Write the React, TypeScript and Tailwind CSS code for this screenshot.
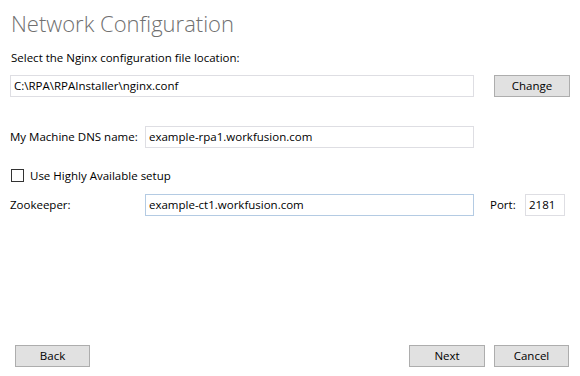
import React from "react";

const font = { fontFamily: '"Open Sans", "Noto Sans", Arial, sans-serif' };

function Field({ value, focused, className }: { value: string; focused?: boolean; className: string }) {
  return (
    <div
      className={`h-[22px] border bg-white flex items-center px-[3px] text-[11.5px] text-black ${
        focused ? "border-[#b4cbe3]" : "border-[#dedee3]"
      } ${className}`}
    >
      {value}
    </div>
  );
}

function Button({ label, className }: { label: string; className: string }) {
  return (
    <button className={`h-[22px] bg-[#e1e1e1] border border-[#adadad] text-[11.5px] text-black flex items-center justify-center ${className}`}>
      {label}
    </button>
  );
}

export default function App() {
  return (
    <div className="w-[580px] h-[376px] bg-white flex flex-col text-black text-[11.5px]" style={font}>
      {/* Header */}
      <h1 className="ml-[11px] mt-[8px] h-[30px] text-[22px] leading-[30px] font-light text-[#707070]">
        Network Configuration
      </h1>

      <div className="ml-[11px] mt-[12px] h-[16px] leading-[16px]">
        Select the Nginx configuration file location:
      </div>

      <div className="mt-[9px] flex items-center">
        <Field value="C:\RPA\RPAInstaller\nginx.conf" className="ml-[10px] w-[464px]" />
        <Button label="Change" className="ml-[20px] w-[76px]" />
      </div>

      <div className="mt-[29px] flex items-center">
        <span className="ml-[10px] w-[135px]">My Machine DNS name:</span>
        <Field value="example-rpa1.workfusion.com" className="w-[329px]" />
      </div>

      <label className="mt-[21px] ml-[11px] flex items-center h-[13px]">
        <span className="w-[13px] h-[13px] border border-[#333333] bg-white" />
        <span className="ml-[6px]">Use Highly Available setup</span>
      </label>

      <div className="mt-[12px] flex items-center">
        <span className="ml-[10px] w-[135px]">Zookeeper:</span>
        <Field value="example-ct1.workfusion.com" focused className="w-[329px]" />
        <span className="ml-[16px] w-[35px]">Port:</span>
        <Field value="2181" className="w-[40px]" />
      </div>

      <div className="mt-auto mb-[9px] flex items-center">
        <Button label="Back" className="ml-[15px] w-[75px]" />
        <Button label="Next" className="ml-auto w-[76px]" />
        <Button label="Cancel" className="ml-[9px] mr-[11px] w-[75px]" />
      </div>
    </div>
  );
}
